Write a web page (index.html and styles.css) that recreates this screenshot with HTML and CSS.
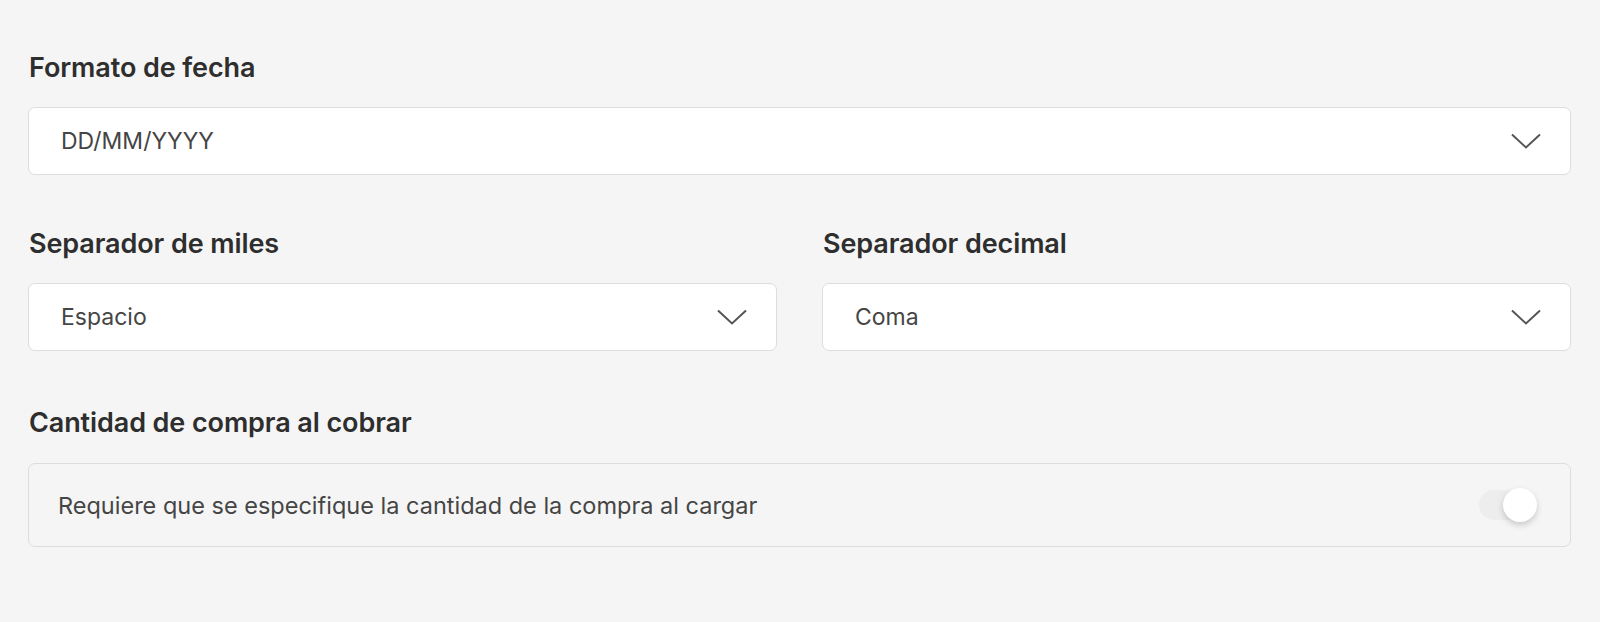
FILE: index.html
```html
<!DOCTYPE html>
<html lang="es">
<head>
<meta charset="utf-8">
<link rel="stylesheet" href="styles.css">
</head>
<body>
<div class="page">
  <div class="field first">
    <div class="label">Formato de fecha</div>
    <div class="select"><span>DD/MM/YYYY</span><svg class="chev" viewBox="0 0 30 16" width="30" height="16"><path d="M1 1.5 L15 14.5 L29 1.5" fill="none" stroke="#555" stroke-width="2"/></svg></div>
  </div>
  <div class="row">
    <div class="field">
      <div class="label">Separador de miles</div>
      <div class="select"><span>Espacio</span><svg class="chev" viewBox="0 0 30 16" width="30" height="16"><path d="M1 1.5 L15 14.5 L29 1.5" fill="none" stroke="#555" stroke-width="2"/></svg></div>
    </div>
    <div class="field">
      <div class="label">Separador decimal</div>
      <div class="select"><span>Coma</span><svg class="chev" viewBox="0 0 30 16" width="30" height="16"><path d="M1 1.5 L15 14.5 L29 1.5" fill="none" stroke="#555" stroke-width="2"/></svg></div>
    </div>
  </div>
  <div class="field last">
    <div class="label">Cantidad de compra al cobrar</div>
    <div class="toggle-box"><span>Requiere que se especifique la cantidad de la compra al cargar</span><div class="switch"><div class="knob"></div></div></div>
  </div>
</div>
</body>
</html>
```
FILE: styles.css
```css
html, body { margin: 0; padding: 0; }
body {
  background: #f5f5f5;
  font-family: Inter, "Noto Sans", sans-serif;
  color: #333;
}
.page {
  padding: 51px 29px 0 28px;
  display: flex;
  flex-direction: column;
}
.field { display: flex; flex-direction: column; gap: 22px; flex: 1; min-width: 0; }
.row { display: flex; gap: 45px; margin-top: 52px; }
.field.last { margin-top: 55px; gap: 23px; }
.label {
  font-size: 27px;
  font-weight: 600;
  line-height: 34px;
  padding-left: 1px;
  color: #2e2e2e;
  letter-spacing: -0.1px;
}
.select {
  height: 68px;
  box-sizing: border-box;
  background: #fff;
  border: 1px solid #dddddd;
  border-radius: 7px;
  display: flex;
  align-items: center;
  justify-content: space-between;
  padding: 0 29px 0 32px;
  font-size: 23px;
  color: #454545;
}
.chev { display: block; }
.toggle-box {
  height: 84px;
  box-sizing: border-box;
  border: 1px solid #dddddd;
  border-radius: 7px;
  display: flex;
  align-items: center;
  justify-content: space-between;
  padding: 0 33px 0 29px;
  font-size: 23.5px;
  color: #454545;
}
.switch {
  width: 58px;
  height: 30px;
  border-radius: 15px;
  background: #ededed;
  position: relative;
}
.knob {
  position: absolute;
  right: 0;
  top: -2px;
  width: 34px;
  height: 34px;
  border-radius: 50%;
  background: #fff;
  box-shadow: 0 3px 6px rgba(0,0,0,0.18);
}
```
